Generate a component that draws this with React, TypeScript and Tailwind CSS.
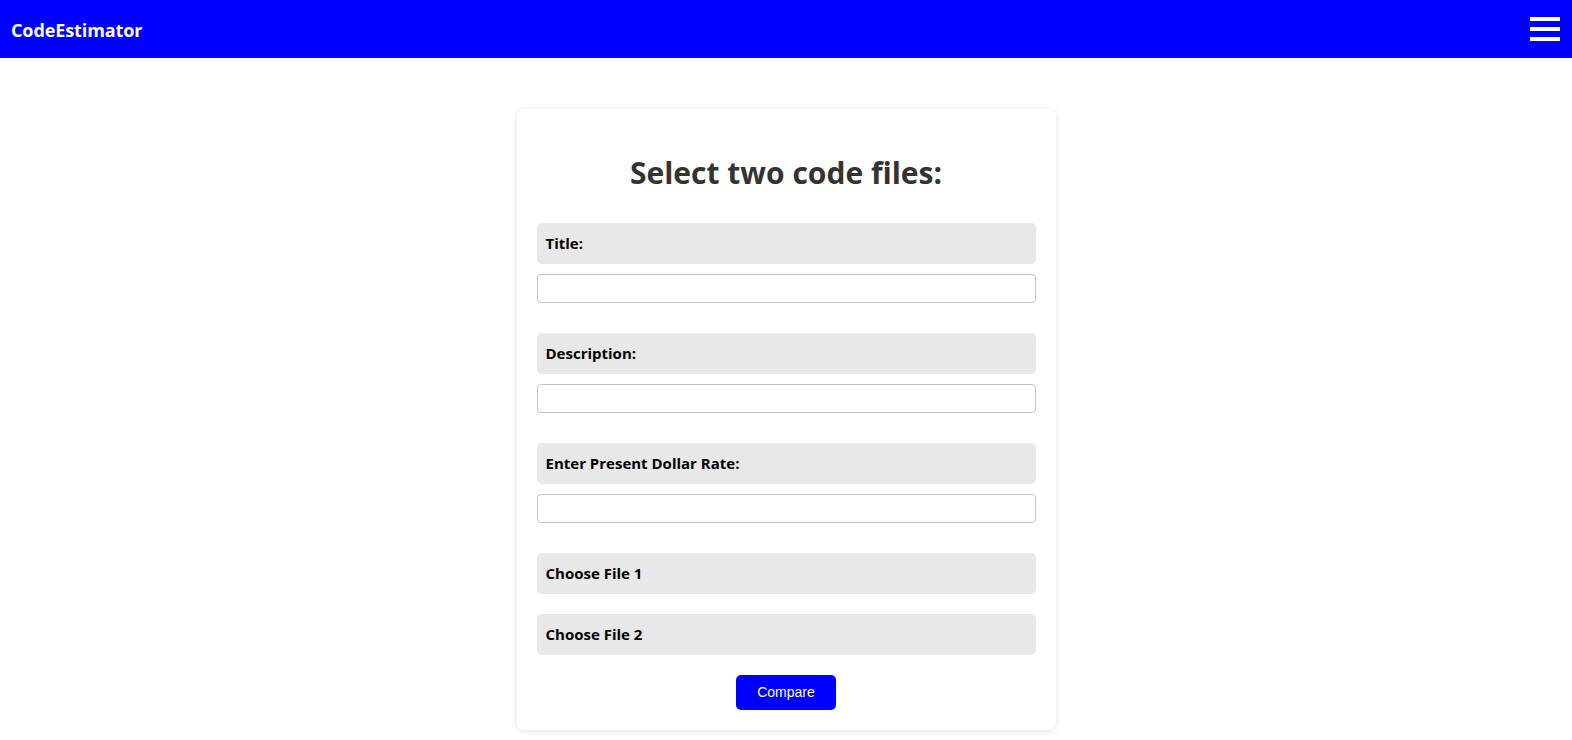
import React from "react";

const font = { fontFamily: '"Open Sans", "Noto Sans", sans-serif' };

function Field({ label, input = true }: { label: string; input?: boolean }) {
  return (
    <div className={input ? "mb-[30px]" : "mb-[20px]"}>
      <div className="h-[41px] flex items-center px-[9px] rounded-[5px] bg-[#e8e8e8] text-[15px] font-bold text-black">
        {label}
      </div>
      {input && (
        <input
          type="text"
          className="mt-[10px] block w-full h-[29px] rounded-[4px] border border-[#c4c4c4] bg-white px-2 outline-none"
        />
      )}
    </div>
  );
}

export default function App() {
  return (
    <div className="min-h-screen bg-white" style={font}>
      <header className="h-[58px] bg-[#0000ff] flex items-center justify-between pl-[11px] pr-[12px]">
        <span className="text-white font-bold text-[18px] tracking-[-0.1px] pt-[3px]">CodeEstimator</span>
        <button className="flex flex-col gap-[6px] w-[30px]">
          <span className="block h-[4px] w-full bg-white" />
          <span className="block h-[4px] w-full bg-white" />
          <span className="block h-[4px] w-full bg-white" />
        </button>
      </header>

      <main className="flex justify-center pt-[51px]">
        <div className="w-[539px] rounded-[6px] bg-white px-[20px] pt-[44px] pb-[20px] shadow-[0_1px_6px_rgba(0,0,0,0.12)]">
          <h2 className="text-center text-[30px] font-bold text-[#333] leading-[40px] mb-[30px]">
            Select two code files:
          </h2>
          <Field label="Title:" />
          <Field label="Description:" />
          <Field label="Enter Present Dollar Rate:" />
          <Field label="Choose File 1" input={false} />
          <Field label="Choose File 2" input={false} />
          <div className="flex justify-center">
            <button
              className="w-[100px] h-[35px] rounded-[5px] bg-[#0000ff] text-white text-[14px]"
              style={{ fontFamily: '"Liberation Sans", Arial, sans-serif' }}
            >
              Compare
            </button>
          </div>
        </div>
      </main>
    </div>
  );
}
